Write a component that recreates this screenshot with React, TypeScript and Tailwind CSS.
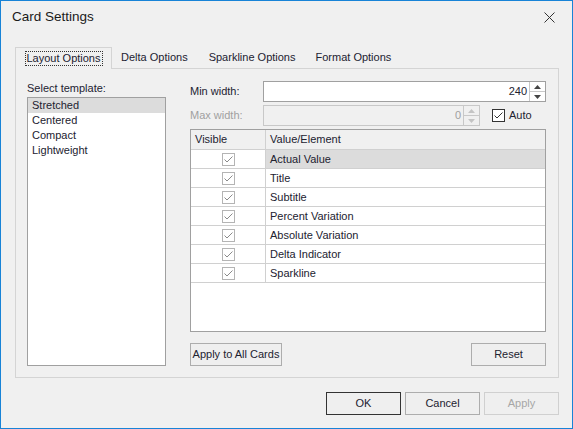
import React from 'react'

const font = { fontFamily: '"Liberation Sans", Arial, sans-serif' }

const templates = ['Stretched', 'Centered', 'Compact', 'Lightweight']
const elements = [
  'Actual Value',
  'Title',
  'Subtitle',
  'Percent Variation',
  'Absolute Variation',
  'Delta Indicator',
  'Sparkline',
]

function Check({ disabled }: { disabled?: boolean }) {
  return (
    <div
      className={`flex h-[13px] w-[13px] items-center justify-center border bg-white ${
        disabled ? 'border-[#b4b4b4]' : 'border-[#333]'
      }`}
    >
      <svg width="11" height="11" viewBox="0 0 11 11">
        <path
          d="M1.5 5.5 L4 8 L9.5 2.5"
          fill="none"
          stroke={disabled ? '#8a8a8a' : '#333'}
          strokeWidth="1"
        />
      </svg>
    </div>
  )
}

function Spinner({ disabled }: { disabled?: boolean }) {
  const c = disabled ? '#c4c4c4' : '#444'
  return (
    <div className="flex w-[16px] flex-col border-l border-[#c8c8c8]">
      <div className="flex flex-1 items-center justify-center border-b border-[#c8c8c8]">
        <svg width="7" height="4" viewBox="0 0 7 4">
          <path d="M0 4 L3.5 0 L7 4 Z" fill={c} />
        </svg>
      </div>
      <div className="flex flex-1 items-center justify-center">
        <svg width="7" height="4" viewBox="0 0 7 4">
          <path d="M0 0 L7 0 L3.5 4 Z" fill={c} />
        </svg>
      </div>
    </div>
  )
}

export default function App() {
  return (
    <div
      className="flex h-[429px] w-[573px] flex-col border border-[#1883d7] bg-[#f0f0f0] text-[11px] text-[#222230]"
      style={font}
    >
      {/* title bar */}
      <div className="flex h-[33px] items-center justify-between pl-[11px] pr-[17px]">
        <span className="text-[13.5px] text-[#1a1a1a]">Card Settings</span>
        <svg width="11" height="11" viewBox="0 0 11 11">
          <path d="M0.5 0.5 L10.5 10.5 M10.5 0.5 L0.5 10.5" stroke="#333" strokeWidth="1" />
        </svg>
      </div>

      <div className="mt-[13px] flex flex-col pl-[14px] pr-[13px]">
        {/* tabs */}
        <div className="flex h-[21px] items-end">
          <div className="relative z-10 -mb-px flex h-[22px] w-[97px] items-center justify-center border border-b-0 border-[#d4d4d4] bg-[#f0f0f0]">
            <span className="border border-dotted border-[#333] px-px leading-[13px]">Layout Options</span>
          </div>
          <div className="flex h-[21px] items-center pl-[9px] pr-[11px]">Delta Options</div>
          <div className="flex h-[21px] items-center px-[10px]">Sparkline Options</div>
          <div className="flex h-[21px] items-center px-[10px]">Format Options</div>
        </div>

        {/* tab page */}
        <div className="flex h-[310px] border border-[#d4d4d4] pb-[11px] pl-[11px] pr-[12px] pt-[12px]">
          <div className="flex w-[139px] flex-col">
            <div className="h-[16px] pt-px leading-[13px]">Select template:</div>
            <div className="flex-1 border border-[#a0a0a0] bg-white">
              {templates.map((t, i) => (
                <div
                  key={t}
                  className={`h-[15px] pl-[4px] leading-[15px] ${i === 0 ? 'bg-[#dcdcdc]' : ''}`}
                >
                  {t}
                </div>
              ))}
            </div>
          </div>

          <div className="ml-[24px] flex flex-1 flex-col">
            <div className="flex h-[21px] items-center">
              <span className="w-[73px]">Min width:</span>
              <div className="flex h-[21px] flex-1 border border-[#a0a0a0] bg-white">
                <div className="flex flex-1 items-center justify-end pr-[2px]">240</div>
                <Spinner />
              </div>
            </div>
            <div className="mt-[3px] flex h-[21px] items-center">
              <span className="w-[73px] text-[#a0a0a0]">Max width:</span>
              <div className="flex h-[21px] w-[217px] border border-[#c8c8c8] bg-[#f0f0f0]">
                <div className="flex flex-1 items-center justify-end pr-[2px] text-[#a0a0a0]">0</div>
                <Spinner disabled />
              </div>
              <div className="ml-[12px]">
                <Check />
              </div>
              <span className="ml-[4px]">Auto</span>
            </div>

            {/* grid */}
            <div className="mt-[3px] flex h-[203px] flex-col border border-[#a0a0a0] bg-white">
              <div className="flex h-[20px] border-b border-[#d0d0d0] bg-[#f0f0f0]">
                <div className="flex w-[75px] items-center border-r border-[#d0d0d0] pl-[4px]">Visible</div>
                <div className="flex flex-1 items-center pl-[4px]">Value/Element</div>
              </div>
              {elements.map((e, i) => (
                <div key={e} className="flex h-[19px] border-b border-[#d0d0d0]">
                  <div className="flex w-[75px] items-center justify-center border-r border-[#d0d0d0]">
                    <Check disabled />
                  </div>
                  <div className={`flex flex-1 items-center pl-[4px] ${i === 0 ? 'bg-[#dcdcdc]' : ''}`}>
                    {e}
                  </div>
                </div>
              ))}
            </div>

            <div className="mt-auto flex justify-between">
              <button className="h-[23px] w-[92px] border border-[#adadad] bg-[#efefef]">
                Apply to All Cards
              </button>
              <button className="h-[23px] w-[75px] border border-[#adadad] bg-[#efefef]">Reset</button>
            </div>
          </div>
        </div>

        {/* dialog buttons */}
        <div className="mt-[14px] flex justify-end gap-[4px]">
          <button className="h-[23px] w-[75px] border border-[#333] bg-[#efefef]">OK</button>
          <button className="h-[23px] w-[75px] border border-[#adadad] bg-[#efefef]">Cancel</button>
          <button className="h-[23px] w-[75px] border border-[#d0d0d0] bg-[#efefef] text-[#a6a6a6]">
            Apply
          </button>
        </div>
      </div>
    </div>
  )
}
